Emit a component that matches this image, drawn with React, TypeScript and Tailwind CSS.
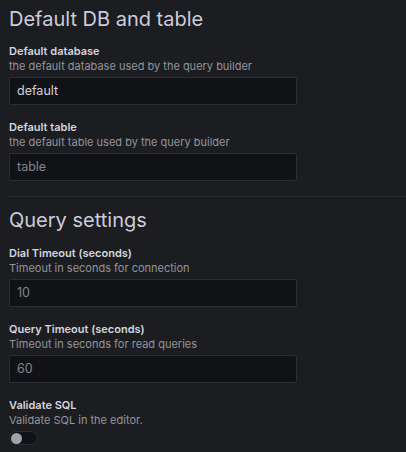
import React from 'react';

const font = { fontFamily: 'Inter, "Noto Sans", sans-serif' };

type FieldProps = {
  label: string;
  description: string;
  value?: string;
  placeholder?: string;
};

const Field: React.FC<FieldProps> = ({ label, description, value, placeholder }) => {
  return (
    <div className="flex flex-col">
      <div className="text-[11px] leading-[14px] font-semibold text-[#d5d6de]">{label}</div>
      <div className="text-[11px] leading-[16px] text-[#93949d]">{description}</div>
      <div className="mt-[3px] flex h-[28px] w-[288px] items-center rounded-[2px] border border-[#2d2e34] bg-[#111216] px-[7px]">
        {value ? (
          <span className="text-[12.5px] text-[#d3d4dc]">{value}</span>
        ) : (
          <span className="text-[12.5px] text-[#83848c]">{placeholder}</span>
        )}
      </div>
    </div>
  );
};

const App: React.FC = () => {
  return (
    <div className="h-[452px] w-[406px] overflow-hidden bg-[#1c1d21] pl-[9px]" style={font}>
      {/* Default DB and table */}
      <h3 className="pt-[6px] text-[20px] leading-[26px] font-normal text-[#ccccdc]">Default DB and table</h3>
      <div className="mt-[12px] flex flex-col gap-[15px]">
        <Field label="Default database" description="the default database used by the query builder" value="default" />
        <Field label="Default table" description="the default table used by the query builder" placeholder="table" />
      </div>

      <div className="mt-[15px] border-t border-[#2d2e34]" />

      {/* Query settings */}
      <h3 className="mt-[10px] text-[20px] leading-[26px] font-normal text-[#ccccdc]">Query settings</h3>
      <div className="mt-[13px] flex flex-col gap-[15px]">
        <Field label="Dial Timeout (seconds)" description="Timeout in seconds for connection" placeholder="10" />
        <Field label="Query Timeout (seconds)" description="Timeout in seconds for read queries" placeholder="60" />
        <div className="flex flex-col">
          <div className="text-[11px] leading-[14px] font-semibold text-[#d5d6de]">Validate SQL</div>
          <div className="text-[11px] leading-[16px] text-[#93949d]">Validate SQL in the editor.</div>
          <div className="mt-[3px] flex h-[14px] w-[29px] items-center rounded-full border border-[#2d2e34] bg-[#111216] px-[1px]">
            <div className="h-[11px] w-[11px] rounded-full bg-[#a0a1aa]" />
          </div>
        </div>
      </div>
    </div>
  );
};

export default App;
